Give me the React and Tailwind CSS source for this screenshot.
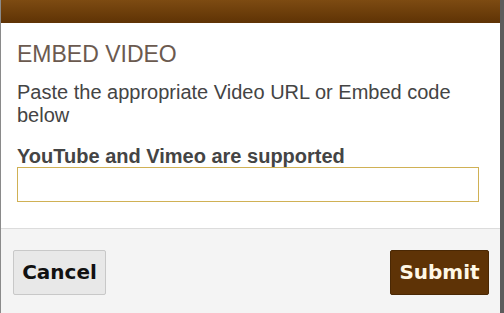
import React from "react";

export default function App() {
    return (
        <div className="w-[504px] h-[313px] bg-[#5c5c5c] overflow-hidden flex">
            <div className="w-[500px] h-full flex flex-col bg-white border-l border-[#8a8a8a]">
                {/* header bar */}
                <div className="h-[23px] shrink-0 bg-gradient-to-b from-[#7d4b12] to-[#5f3305]" />

                {/* body */}
                <div
                    className="flex-1 px-[16px] pt-[18px]"
                    style={{ fontFamily: '"Liberation Sans", Arial, sans-serif' }}
                >
                    <h2 className="text-[23px] leading-[26px] text-[#6b5a4f] uppercase">Embed Video</h2>
                    <p className="mt-[14px] text-[20px] leading-[23px] text-[#444]">
                        Paste the appropriate Video URL or Embed code below
                    </p>
                    <label className="block mt-[18px] text-[20px] leading-[22px] font-bold text-[#444]">
                        YouTube and Vimeo are supported
                    </label>
                    <input
                        type="text"
                        className="block w-[462px] h-[35px] border border-[#d0b155] outline-none px-2"
                    />
                </div>

                {/* footer */}
                <div
                    className="h-[85px] shrink-0 bg-[#f4f4f4] border-t border-[#dcdcdc] flex items-center justify-between pl-[12px] pr-[11px] pt-[2px]"
                    style={{ fontFamily: '"DejaVu Sans", Verdana, sans-serif' }}
                >
                    <button className="w-[93px] h-[45px] bg-[#e8e8e8] border border-[#c8c8c8] rounded-[2px] text-[20px] font-bold text-[#111]">
                        Cancel
                    </button>
                    <button className="w-[99px] h-[45px] bg-[#5e3306] border border-[#4a2804] rounded-[2px] text-[20px] font-bold text-[#fff8e6]">
                        Submit
                    </button>
                </div>
            </div>
        </div>
    );
}
